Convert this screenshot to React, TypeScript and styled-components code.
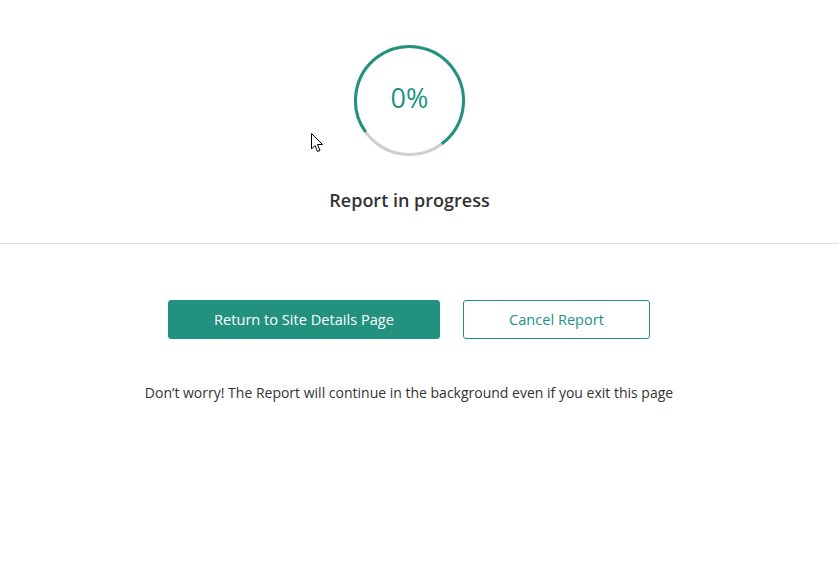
import React from 'react';
import styled, { createGlobalStyle } from 'styled-components';

const GlobalStyle = createGlobalStyle`
    html, body {
        margin: 0;
        padding: 0;
        background: #fff;
        font-family: "Open Sans", "Noto Sans", Arial, sans-serif;
        color: #333;
    }
`;

const Page = styled.div`
    position: relative;
    width: 100%;
    min-height: 568px;
`;

const Header = styled.div`
    display: flex;
    flex-direction: column;
    align-items: center;
    padding: 44px 20px 0 0;
    height: 199px;
    border-bottom: 1px solid #dcdcdc;
`;

const Progress = styled.div`
    position: relative;
    width: 113px;
    height: 113px;
    display: flex;
    align-items: center;
    justify-content: center;
`;

const Ring = styled.svg`
    position: absolute;
    inset: 0;
`;

const Percent = styled.span`
    font-size: 27px;
    font-weight: 400;
    color: #22927f;
    margin-top: -6px;
`;

const Title = styled.h2`
    margin: 31px 0 0;
    font-size: 18px;
    font-weight: 600;
    color: #333;
`;

const Body = styled.div`
    display: flex;
    flex-direction: column;
    align-items: center;
    padding: 56px 21px 0 0;
`;

const Actions = styled.div`
    display: flex;
    gap: 23px;
`;

const Button = styled.button<{ $outline?: boolean }>`
    height: 39px;
    padding: 0 0 1px;
    border-radius: 3px;
    font-family: inherit;
    font-size: 14.6px;
    cursor: pointer;
    border: 1px solid #22927f;
    background: ${(p) => (p.$outline ? '#fff' : '#22927f')};
    color: ${(p) => (p.$outline ? '#22927f' : '#fff')};
    width: ${(p) => (p.$outline ? '187px' : '272px')};
`;

const Note = styled.p`
    margin: 44px 0 0;
    font-size: 14px;
    color: #333;
`;

const Cursor = styled.svg`
    position: absolute;
    left: 311px;
    top: 133px;
`;

const R = 54;
const C = 2 * Math.PI * R;

const ProgressRing: React.FC = () => (
    <Progress>
        <Ring width="113" height="113" viewBox="0 0 113 113">
            <circle cx="56.5" cy="56.5" r={R} fill="none" stroke="#cfcfcf" strokeWidth="3" />
            <circle
                cx="56.5"
                cy="56.5"
                r={R}
                fill="none"
                stroke="#22927f"
                strokeWidth="3"
                strokeDasharray={`${(C * 269) / 360} ${C}`}
                transform="rotate(144 56.5 56.5)"
            />
        </Ring>
        <Percent>0%</Percent>
    </Progress>
);

const App: React.FC = () => {
    return (
        <Page>
            <GlobalStyle />
            <Header>
                <ProgressRing />
                <Title>Report in progress</Title>
            </Header>
            <Body>
                <Actions>
                    <Button>Return to Site Details Page</Button>
                    <Button $outline>Cancel Report</Button>
                </Actions>
                <Note>Don’t worry! The Report will continue in the background even if you exit this page</Note>
            </Body>
            <Cursor width="13" height="21" viewBox="0 0 13 21">
                <path
                    d="M0.5 0.5 L0.5 16 L4 12.5 L6.5 18.5 L9 17.5 L6.5 11.5 L11.5 11.5 Z"
                    fill="#fff"
                    stroke="#000"
                    strokeWidth="1"
                    strokeLinejoin="miter"
                />
            </Cursor>
        </Page>
    );
};

export default App;
